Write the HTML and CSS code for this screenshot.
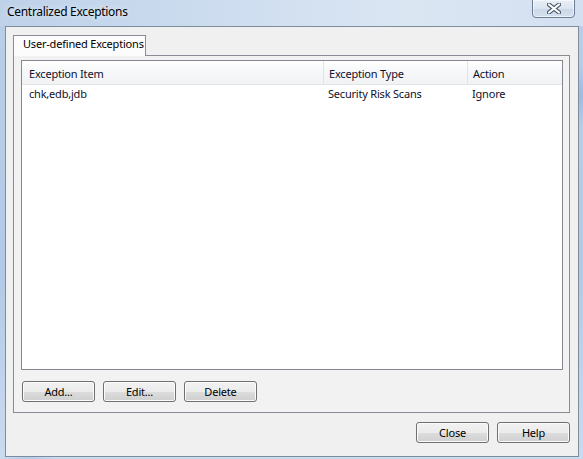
FILE: index.html
```
<!DOCTYPE html>
<html lang="en">
<head>
    <meta charset="UTF-8">
    <title>Centralized Exceptions</title>
    <link rel="stylesheet" href="styles.css">
</head>
<body>

<div class="window">
    <div class="titlebar">
        <span class="title">Centralized Exceptions</span>
        <button class="caption-close" type="button">
            <svg width="14" height="11" viewBox="0 0 14 11">
                <path d="M2 1.5 L12 9.5 M12 1.5 L2 9.5" stroke="#4a5668" stroke-width="4.2" stroke-linecap="round"/>
                <path d="M2 1.5 L12 9.5 M12 1.5 L2 9.5" stroke="#ffffff" stroke-width="2.2" stroke-linecap="round"/>
            </svg>
        </button>
    </div>

    <div class="client">
        <div class="tabs">
            <div class="tab">User-defined Exceptions</div>
        </div>

        <div class="tab-panel">
            <div class="list">
                <div class="list-row list-head">
                    <div class="cell">Exception Item</div>
                    <div class="cell">Exception Type</div>
                    <div class="cell">Action</div>
                </div>
                <div class="list-row">
                    <div class="cell">chk,edb,jdb</div>
                    <div class="cell">Security Risk Scans</div>
                    <div class="cell">Ignore</div>
                </div>
            </div>

            <div class="button-row">
                <button class="btn" type="button">Add...</button>
                <button class="btn" type="button">Edit...</button>
                <button class="btn" type="button">Delete</button>
            </div>
        </div>

        <div class="dialog-buttons">
            <button class="btn" type="button">Close</button>
            <button class="btn" type="button">Help</button>
        </div>
    </div>
</div>

</body>
</html>
```

FILE: styles.css
```
* {
    box-sizing: border-box;
}
body {
    margin: 0;
    width: 583px;
    height: 459px;
    overflow: hidden;
    font-family: "Noto Sans", "Liberation Sans", sans-serif;
    font-size: 11px;
    letter-spacing: -0.2px;
    color: #000;
    background:
        radial-gradient(ellipse 6px 30px at 581px 95px, #9bb8e6, rgba(155, 184, 230, 0)),
        radial-gradient(ellipse 30px 4px at 28px 458px, #b4cdef, rgba(180, 205, 239, 0)),
        linear-gradient(180deg, #b9cee8 0%, #b3cae6 60%, #c9dbef 100%);
}
.window {
    display: flex;
    flex-direction: column;
    height: 459px;
}

/* title bar */
.titlebar {
    height: 26px;
    display: flex;
    align-items: flex-start;
    padding-left: 7px;
    background: linear-gradient(90deg, #bdd1e9 0%, #ccdcef 35%, #dbe6f3 70%, #d3e0f1 100%);
}
.title {
    font-size: 12px;
    line-height: 16px;
    padding-top: 4px;
    letter-spacing: -0.3px;
    text-shadow: 0 0 6px rgba(255, 255, 255, 0.9);
}
.caption-close {
    margin-left: auto;
    margin-right: 8px;
    margin-top: -1px;
    width: 43px;
    height: 19px;
    padding: 0;
    display: flex;
    align-items: center;
    justify-content: center;
    border: 1px solid #6b7c94;
    border-radius: 0 0 4px 4px;
    background: linear-gradient(180deg, #e9eff7 0%, #dbe5f1 50%, #cbd8e9 51%, #d6e1ee 100%);
    box-shadow: inset 0 0 0 1px rgba(255, 255, 255, 0.6);
}

/* client area */
.client {
    width: 574px;
    height: 431px;
    margin-left: 5px;
    border: 1px solid #7f8c9b;
    background: #f0f0f0;
    padding: 8px 8px 0 7px;
    display: flex;
    flex-direction: column;
}
.tabs {
    display: flex;
}
.tab {
    position: relative;
    z-index: 1;
    width: 133px;
    height: 21px;
    margin-bottom: -1px;
    padding-left: 9px;
    line-height: 15px;
    border: 1px solid #898c95;
    border-bottom: none;
    background: #fcfcfc;
    white-space: nowrap;
    overflow: hidden;
}
.tab-panel {
    width: 557px;
    height: 358px;
    border: 1px solid #898c95;
    background: #f2f2f2;
    padding: 4px 6px 0 7px;
}

/* list view */
.list {
    height: 310px;
    border: 1px solid #828790;
    background: #fff;
}
.list-row {
    display: grid;
    grid-template-columns: 301px 144px 1fr;
    height: 22px;
    line-height: 15px;
    padding-top: 1px;
    color: #10102c;
}
.list-row .cell {
    padding-left: 5px;
    white-space: nowrap;
}
.list-row .cell:first-child {
    padding-left: 7px;
}
.list-head {
    height: 24px;
    padding-top: 0;
    border-bottom: 1px solid #e3e4e6;
    background: linear-gradient(180deg, #ffffff 0%, #f7f8f9 40%, #f1f2f4 100%);
}
.list-head .cell {
    padding-top: 5px;
}
.list-head .cell + .cell {
    border-left: 1px solid #e2e3e5;
}

/* buttons */
.button-row {
    display: flex;
    gap: 8px;
    margin-top: 11px;
    padding-left: 1px;
}
.dialog-buttons {
    display: flex;
    justify-content: flex-end;
    gap: 8px;
    margin-top: 9px;
}
.btn {
    width: 73px;
    height: 21px;
    padding: 0;
    font-family: inherit;
    font-size: 11px;
    letter-spacing: inherit;
    color: #000;
    border: 1px solid #707070;
    border-radius: 3px;
    background: linear-gradient(180deg, #f2f2f2 0%, #ebebeb 50%, #dddddd 51%, #cfcfcf 100%);
    box-shadow: inset 0 0 0 1px #fbfbfb;
}
```
